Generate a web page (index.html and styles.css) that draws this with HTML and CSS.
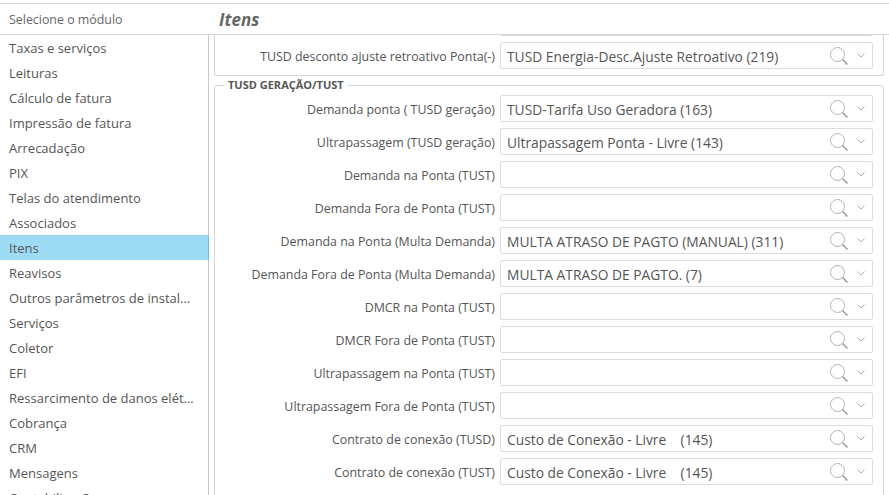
FILE: index.html
```html
<!DOCTYPE html>
<html lang="pt">
<head>
<meta charset="utf-8">
<title>Itens</title>
<link rel="stylesheet" href="styles.css">
</head>
<body>
<svg width="0" height="0" class="defs">
  <symbol id="lupa" viewBox="0 0 18 18"><circle cx="7.500" cy="7.500" r="7" fill="none" stroke="#b4b4b4" stroke-width="1"/><path d="M12.500 12.500l5 5" fill="none" stroke="#9a9a9a" stroke-width="1.500"/></symbol>
  <symbol id="seta" viewBox="0 0 8 5"><path d="M.5.500l3.500 3.500 3.500-3.500" fill="none" stroke="#adadad" stroke-width="1"/></symbol>
</svg>
<div class="app">
  <header class="topbar">
    <div class="module-title">Selecione o módulo</div>
    <h1 class="page-title">Itens</h1>
  </header>
  <div class="main">
    <nav class="sidebar">
      <a class="item">Taxas e serviços</a>
      <a class="item">Leituras</a>
      <a class="item">Cálculo de fatura</a>
      <a class="item">Impressão de fatura</a>
      <a class="item">Arrecadação</a>
      <a class="item">PIX</a>
      <a class="item">Telas do atendimento</a>
      <a class="item">Associados</a>
      <a class="item active">Itens</a>
      <a class="item">Reavisos</a>
      <a class="item">Outros parâmetros de instalação</a>
      <a class="item">Serviços</a>
      <a class="item">Coletor</a>
      <a class="item">EFI</a>
      <a class="item">Ressarcimento de danos elétricos</a>
      <a class="item">Cobrança</a>
      <a class="item">CRM</a>
      <a class="item">Mensagens</a>
      <a class="item">Contabilização</a>
    </nav>
    <section class="content">
      <div class="scroller">
        <div class="group group-top">
          <div class="row"><span class="label"></span><div class="field"><span class="value"></span><svg class="lupa"><use href="#lupa"/></svg><svg class="seta"><use href="#seta"/></svg></div></div>
          <div class="row"><span class="label">TUSD desconto ajuste retroativo Ponta(-)</span><div class="field"><span class="value">TUSD Energia-Desc.Ajuste Retroativo (219)</span><svg class="lupa"><use href="#lupa"/></svg><svg class="seta"><use href="#seta"/></svg></div></div>
        </div>
        <fieldset class="group group-main">
          <legend class="legend">TUSD GERAÇÃO/TUST</legend>
          <div class="row"><span class="label">Demanda ponta ( TUSD geração)</span><div class="field"><span class="value">TUSD-Tarifa Uso Geradora (163)</span><svg class="lupa"><use href="#lupa"/></svg><svg class="seta"><use href="#seta"/></svg></div></div>
          <div class="row"><span class="label">Ultrapassagem (TUSD geração)</span><div class="field"><span class="value">Ultrapassagem Ponta - Livre (143)</span><svg class="lupa"><use href="#lupa"/></svg><svg class="seta"><use href="#seta"/></svg></div></div>
          <div class="row"><span class="label">Demanda na Ponta (TUST)</span><div class="field"><span class="value"></span><svg class="lupa"><use href="#lupa"/></svg><svg class="seta"><use href="#seta"/></svg></div></div>
          <div class="row"><span class="label">Demanda Fora de Ponta (TUST)</span><div class="field"><span class="value"></span><svg class="lupa"><use href="#lupa"/></svg><svg class="seta"><use href="#seta"/></svg></div></div>
          <div class="row"><span class="label">Demanda na Ponta (Multa Demanda)</span><div class="field"><span class="value">MULTA ATRASO DE PAGTO (MANUAL) (311)</span><svg class="lupa"><use href="#lupa"/></svg><svg class="seta"><use href="#seta"/></svg></div></div>
          <div class="row"><span class="label">Demanda Fora de Ponta (Multa Demanda)</span><div class="field"><span class="value">MULTA ATRASO DE PAGTO. (7)</span><svg class="lupa"><use href="#lupa"/></svg><svg class="seta"><use href="#seta"/></svg></div></div>
          <div class="row"><span class="label">DMCR na Ponta (TUST)</span><div class="field"><span class="value"></span><svg class="lupa"><use href="#lupa"/></svg><svg class="seta"><use href="#seta"/></svg></div></div>
          <div class="row"><span class="label">DMCR Fora de Ponta (TUST)</span><div class="field"><span class="value"></span><svg class="lupa"><use href="#lupa"/></svg><svg class="seta"><use href="#seta"/></svg></div></div>
          <div class="row"><span class="label">Ultrapassagem na Ponta (TUST)</span><div class="field"><span class="value"></span><svg class="lupa"><use href="#lupa"/></svg><svg class="seta"><use href="#seta"/></svg></div></div>
          <div class="row"><span class="label">Ultrapassagem Fora de Ponta (TUST)</span><div class="field"><span class="value"></span><svg class="lupa"><use href="#lupa"/></svg><svg class="seta"><use href="#seta"/></svg></div></div>
          <div class="row"><span class="label">Contrato de conexão (TUSD)</span><div class="field"><span class="value">Custo de Conexão - Livre &nbsp;&nbsp;&nbsp;(145)</span><svg class="lupa"><use href="#lupa"/></svg><svg class="seta"><use href="#seta"/></svg></div></div>
          <div class="row"><span class="label">Contrato de conexão (TUST)</span><div class="field"><span class="value">Custo de Conexão - Livre &nbsp;&nbsp;&nbsp;(145)</span><svg class="lupa"><use href="#lupa"/></svg><svg class="seta"><use href="#seta"/></svg></div></div>
        </fieldset>
      </div>
    </section>
  </div>
</div>
</body>
</html>
```
FILE: styles.css
```css
* { box-sizing: border-box; }
html, body { margin: 0; height: 100%; overflow: hidden; background: #fff; }
body { font-family: "Open Sans", "Noto Sans", sans-serif; color: #555; }
.defs { display: block; height: 0; width: 0; }
.app { display: flex; flex-direction: column; height: 495px; padding-top: 3px; }
.topbar { flex: none; height: 32px; display: flex; align-items: center; border-top: 1px solid #d6d6d6; border-bottom: 1px solid #d6d6d6; }
.module-title { width: 219px; padding-left: 9px; font-size: 12.400px; color: #666; }
.page-title { margin: 0; font-size: 17px; font-weight: 700; font-style: italic; color: #666; }
.main { flex: 1; min-height: 0; display: flex; }
.sidebar { flex: none; width: 209px; overflow: hidden; }
.item { display: block; height: 25px; line-height: 27px; padding-left: 9px; padding-right: 12px; border-right: 1px solid #c8c8c8; font-size: 13px; color: #555; white-space: nowrap; overflow: hidden; text-overflow: ellipsis; }
.item.active { background: #9edcf6; border-right-color: #72bdf0; }
.content { flex: 1; min-width: 0; overflow: hidden; padding: 0 5px 0 5px; }
.scroller { margin-top: -34px; }
.group { margin: 0; padding: 1px 10px 0 0; border: 1px solid #d4d4d4; border-radius: 3px; min-width: 0; }
.group-top { height: 75px; padding-top: 5px; margin-bottom: 3px; border-top: 0; }
.group-main { padding-bottom: 30px; }
.legend { margin-left: 9px; padding: 0 4px 0 4px; font-size: 11px; font-weight: 700; color: #555; line-height: 12px; }
.row { height: 33px; display: flex; align-items: center; }
.label { width: 285px; flex: none; padding-right: 5px; padding-top: 2px; text-align: right; font-size: 12.400px; color: #555; white-space: nowrap; }
.field { flex: 1; min-width: 0; height: 27px; display: flex; align-items: center; border: 1px solid #dcdcdc; border-radius: 2px; padding: 0 7px 0 6px; }
.value { flex: 1; min-width: 0; padding-top: 2px; font-size: 13.800px; color: #555; white-space: nowrap; overflow: hidden; }
.lupa { width: 18px; height: 18px; flex: none; margin-right: 9px; }
.seta { width: 8px; height: 5px; flex: none; }
```
